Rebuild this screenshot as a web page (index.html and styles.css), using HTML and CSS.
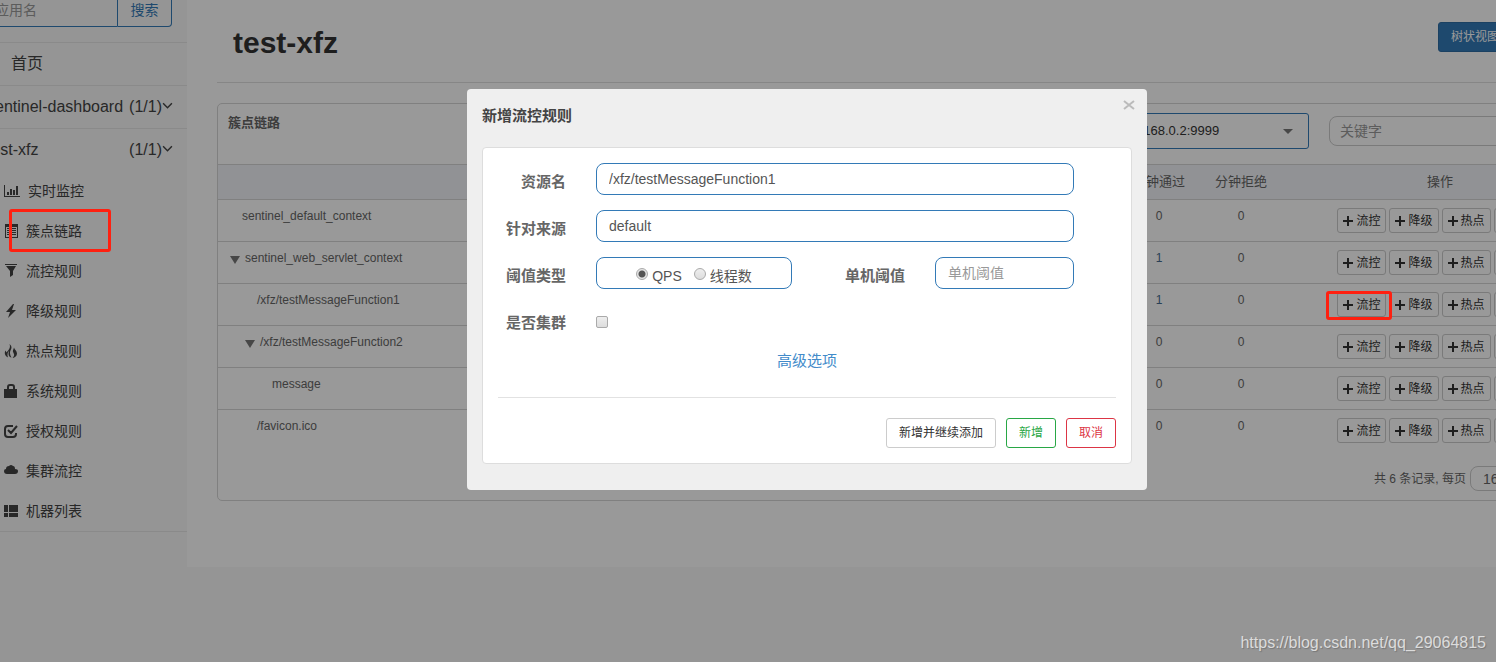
FILE: index.html
```html
<!DOCTYPE html>
<html lang="zh-CN">
<head>
<meta charset="utf-8">
<title>test-xfz</title>
<link rel="stylesheet" href="styles.css">
</head>
<body>
<div class="page">
  <div class="shell">
    <aside class="sidebar">
      <form class="search">
        <input class="search-input" type="text" placeholder="应用名" aria-label="应用名">
        <button class="search-button" type="button">搜索</button>
      </form>
      <nav>
        <a class="nav-item nav-home" href="#">首页</a>
        <a class="nav-item" href="#"><span>sentinel-dashboard</span><span class="count">(1/1)<svg class="chevron" viewBox="0 0 10 10"><path d="M1 3l4 4 4-4"/></svg></span></a>
        <a class="nav-item" href="#"><span>test-xfz</span><span class="count">(1/1)<svg class="chevron" viewBox="0 0 10 10"><path d="M1 3l4 4 4-4"/></svg></span></a>
        <ul class="subnav">
          <li><a href="#"><svg class="icon icon-wide" viewBox="0 0 16 14"><path d="M0 1h1v11h15v1H0zM3 8h2v3H3zM6 5h2v6H6zM9 6h2v5H9zM12 2h2v9h-2z"/></svg>实时监控</a></li>
          <li><a href="#"><svg class="icon" viewBox="0 0 14 14"><path fill-rule="evenodd" d="M1 0h13v14H1zM2 3v10h11V3zM3 4h2v1H3zM6 4h6v1H6zM3 6h2v1H3zM6 6h6v1H6zM3 8h2v1H3zM6 8h6v1H6zM3 10h2v1H3zM6 10h6v1H6z"/></svg>簇点链路</a></li>
          <li><a href="#"><svg class="icon" viewBox="0 0 14 14"><path d="M1 0h12v1H1zM2 2h10L9 7v4l-3 2V7z"/></svg>流控规则</a></li>
          <li><a href="#"><svg class="icon" viewBox="0 0 14 14"><path d="M9 0L2 8h4l-2 6 8-8H8l2-6z"/></svg>降级规则</a></li>
          <li><a href="#"><svg class="icon" viewBox="0 0 14 14"><path d="M5.500 0c3 2.500 2 4.500 1 6.500-1 2-.5 4.500 1 7C4.500 13 4 10 5 7 3.500 8 3 11 4 13.500 1 12 0 9 1.500 6.500l1 2C4.500 6 7 4 5.500 0zM10 3.500c.5 2 3 3.500 3 6 0 2.500-2 4-4.500 4.500 2-2 2-3.500 1-5-1.500-2 0-3.500.5-5.500z"/></svg>热点规则</a></li>
          <li><a href="#"><svg class="icon" viewBox="0 0 14 14"><path fill-rule="evenodd" d="M3 5V3q0-3 3-3h2q3 0 3 3v2h2v9H0V5zM5 5h4V3q0-1-1-1H6Q5 2 5 3z"/></svg>系统规则</a></li>
          <li><a href="#"><svg class="icon" viewBox="0 0 14 14"><path class="stroke" d="M9 2H4Q1 2 1 5v5q0 3 3 3h5q3 0 3-3V9M4 6l3 3 6-7"/></svg>授权规则</a></li>
          <li><a href="#"><svg class="icon" viewBox="0 0 14 14"><path d="M3 10Q0 10 0 7q0-2 2-2 0-3 3-3Q7 0 9 2q2 0 2 3 3 0 3 2 0 3-3 3z"/></svg>集群流控</a></li>
          <li><a href="#"><svg class="icon" viewBox="0 0 14 14"><path d="M0 1h4v7H0zM5 1h9v7H5zM0 9h4v4H0zM5 9h9v4H5z"/></svg>机器列表</a></li>
        </ul>
      </nav>
    </aside>

    <main class="main">
      <header class="page-header">
        <h1>test-xfz</h1>
        <button class="view-button" type="button">树状视图</button>
      </header>
      <section class="panel">
        <div class="panel-head">
          <h2>簇点链路</h2>
          <select class="machine" aria-label="机器"><option>192.168.0.2:9999</option></select>
          <input class="keyword" type="text" placeholder="关键字" aria-label="关键字">
        </div>
        <table class="resources">
          <colgroup><col><col class="col-num"><col class="col-num"><col class="col-actions"></colgroup>
          <thead><tr><th></th><th>分钟通过</th><th>分钟拒绝</th><th>操作</th></tr></thead>
          <tbody>
            <tr><td class="leaf">sentinel_default_context</td><td>0</td><td>0</td><td><div class="actions"><button type="button">流控</button><button type="button">降级</button><button type="button">热点</button><button type="button">授权</button></div></td></tr>
            <tr><td class="branch"><span class="caret"></span>sentinel_web_servlet_context</td><td class="hit">1</td><td>0</td><td><div class="actions"><button type="button">流控</button><button type="button">降级</button><button type="button">热点</button><button type="button">授权</button></div></td></tr>
            <tr><td class="leaf level-1">/xfz/testMessageFunction1</td><td class="hit">1</td><td>0</td><td><div class="actions"><button type="button">流控</button><button type="button">降级</button><button type="button">热点</button><button type="button">授权</button></div></td></tr>
            <tr><td class="branch level-1"><span class="caret"></span>/xfz/testMessageFunction2</td><td>0</td><td>0</td><td><div class="actions"><button type="button">流控</button><button type="button">降级</button><button type="button">热点</button><button type="button">授权</button></div></td></tr>
            <tr><td class="leaf level-2">message</td><td>0</td><td>0</td><td><div class="actions"><button type="button">流控</button><button type="button">降级</button><button type="button">热点</button><button type="button">授权</button></div></td></tr>
            <tr><td class="leaf level-1">/favicon.ico</td><td>0</td><td>0</td><td><div class="actions"><button type="button">流控</button><button type="button">降级</button><button type="button">热点</button><button type="button">授权</button></div></td></tr>
          </tbody>
        </table>
        <div class="pager">
          <label for="page-size">共 6 条记录, 每页</label>
          <input id="page-size" type="text" value="16">
        </div>
      </section>
    </main>
  </div>

  <div class="backdrop">
    <div class="dialog" role="dialog" aria-labelledby="dialog-title">
      <header class="dialog-head">
        <h2 id="dialog-title">新增流控规则</h2>
        <button class="close" type="button" aria-label="关闭"><svg viewBox="0 0 12 12"><path d="M1 2l10 8M11 2L1 10"/></svg></button>
      </header>
      <form class="card">
        <div class="fields">
          <label for="resource">资源名</label>
          <input class="field wide" id="resource" type="text" value="/xfz/testMessageFunction1">
          <label for="origin">针对来源</label>
          <input class="field wide" id="origin" type="text" value="default">
          <span class="label" id="type-label">阈值类型</span>
          <div class="field radios" role="radiogroup" aria-labelledby="type-label">
            <input type="radio" name="type" id="qps" checked><label for="qps">QPS</label>
            <input type="radio" name="type" id="threads"><label for="threads">线程数</label>
          </div>
          <label for="threshold">单机阈值</label>
          <input class="field" id="threshold" type="text" placeholder="单机阈值">
          <label for="cluster">是否集群</label>
          <input type="checkbox" id="cluster">
        </div>
        <a class="advanced" href="#">高级选项</a>
        <footer class="card-foot">
          <button type="button">新增并继续添加</button>
          <button class="add" type="button">新增</button>
          <button class="cancel" type="button">取消</button>
        </footer>
      </form>
    </div>
  </div>

  <div class="marker marker-menu"></div>
  <div class="marker marker-action"></div>
  <div class="watermark">https://blog.csdn.net/qq_29064815</div>
</div>
</body>
</html>
```
FILE: styles.css
```css
* { box-sizing: border-box; }

body {
  margin: 0;
  background: #f8f8f8;
  color: #444;
  font: 14px/20px "Liberation Sans", "Noto Sans CJK SC", sans-serif;
}

button, input, select { font: inherit; color: inherit; margin: 0; }
h1, h2, ul { margin: 0; padding: 0; }
a { text-decoration: none; color: inherit; }
::placeholder { color: #999; opacity: 1; }

.page {
  position: relative;
  min-height: 100vh;
  overflow: hidden;
}

.shell {
  display: flex;
  align-items: flex-start;
  margin: -22px -146px 0 -28px;
}

/* Sidebar */
.sidebar { flex: 0 0 215px; min-width: 0; }

.search { display: flex; padding: 15px; }

.search-input {
  flex: 1;
  min-width: 0;
  height: 34px;
  padding: 0 7px;
  border: 1px solid #337ab7;
  border-radius: 4px 0 0 4px;
  background: #f8f8f8;
}

.search-button {
  width: 54px;
  padding: 0;
  border: 1px solid #337ab7;
  border-left: 0;
  border-radius: 0 4px 4px 0;
  background: #f8f8f8;
  color: #337ab7;
}

.nav-item {
  display: flex;
  justify-content: space-between;
  align-items: center;
  height: 43px;
  padding: 0 14px 0 15px;
  border-top: 1px solid #e7e7e7;
  font-size: 16px;
}

.nav-home { padding-left: 39px; }
.count { display: flex; align-items: center; }

.chevron {
  width: 11px;
  height: 11px;
  margin-bottom: 4px;
  fill: none;
  stroke: #444;
  stroke-width: 1.3;
}

.subnav { list-style: none; border-bottom: 1px solid #e7e7e7; }

.subnav a {
  display: flex;
  align-items: center;
  gap: 8px;
  height: 40px;
  padding-left: 32px;
}

.icon { width: 14px; height: 14px; fill: #444; }
.icon-wide { width: 16px; }
.icon .stroke { fill: none; stroke: #444; stroke-width: 2; }

/* Main column */
.main {
  flex: 1;
  min-width: 0;
  padding: 22px 43px 66px 30px;
  background: #fff;
}

.page-header {
  display: flex;
  justify-content: space-between;
  align-items: flex-start;
  height: 83px;
  padding: 22px 87px 0 16px;
  border-bottom: 1px solid #e0e0e0;
}

h1 { color: #333; font-size: 30px; line-height: 42px; }

.view-button {
  height: 30px;
  padding: 0 12px;
  border: 1px solid #2e6da4;
  border-radius: 3px;
  background: #337ab7;
  color: #fff;
  font-size: 12px;
}

.panel {
  margin-top: 20px;
  border: 1px solid #d5d5d5;
  border-radius: 5px;
  color: #666;
}

.panel-head {
  display: flex;
  align-items: center;
  gap: 20px;
  height: 60px;
  padding: 9px 10px 15px;
}

.panel-head h2 {
  flex: 1;
  align-self: flex-start;
  font-size: 13px;
}

.machine {
  width: 204px;
  height: 36px;
  padding: 0 12px;
  appearance: none;
  border: 1px solid #337ab7;
  border-radius: 3px;
  background: #fff url("data:image/svg+xml,%3Csvg xmlns='http://www.w3.org/2000/svg' viewBox='0 0 10 5'%3E%3Cpath d='M0 0h10L5 5z' fill='%23777'/%3E%3C/svg%3E") no-repeat right 15px center / 10px 5px;
  color: #333;
  font-size: 13px;
}

.keyword {
  width: 259px;
  height: 30px;
  padding: 0 10px;
  border: 1px solid #ccc;
  border-radius: 8px;
  background: #fff;
}

.resources {
  width: 100%;
  table-layout: fixed;
  border-collapse: separate;
  border-spacing: 0;
  font-size: 12px;
}

.col-num { width: 82px; }
.col-actions { width: 316px; }

th {
  height: 35px;
  padding: 0;
  border-top: 1px solid #d5d5d5;
  background: #f2f4f8;
  font-size: 13px;
  font-weight: 400;
}

td {
  padding: 8px 0;
  border-top: 1px solid #d5d5d5;
  line-height: 16px;
  text-align: center;
  vertical-align: top;
}

td.leaf { padding-left: 24px; text-align: left; }
td.branch { padding-left: 12px; text-align: left; }
td.leaf.level-1 { padding-left: 39px; }
td.branch.level-1 { padding-left: 27px; }
td.leaf.level-2 { padding-left: 54px; }
td.hit { color: #456b8f; }

.caret {
  display: inline-block;
  margin-right: 5px;
  border: solid transparent;
  border-width: 8px 5px 0;
  border-top-color: #777;
  vertical-align: -2px;
}

.actions { display: flex; justify-content: center; gap: 3px; }

.actions button {
  display: flex;
  align-items: center;
  gap: 3px;
  height: 25px;
  padding: 0 5px;
  border: 1px solid #ccc;
  border-radius: 3px;
  background: #fff;
  color: #333;
}

.actions button::before {
  content: "";
  width: 10px;
  height: 10px;
  background:
    linear-gradient(#333, #333) center / 10px 2px no-repeat,
    linear-gradient(#333, #333) center / 2px 10px no-repeat;
}

.pager {
  display: flex;
  justify-content: flex-end;
  align-items: center;
  gap: 4px;
  padding: 15px 10px 9px;
  font-size: 12px;
}

.pager input {
  width: 118px;
  height: 25px;
  padding: 0 12px;
  border: 1px solid #ccc;
  border-radius: 8px;
  background: #fff;
  font-size: 14px;
}

/* Dialog */
.backdrop {
  position: absolute;
  inset: 0 -146px 0 -28px;
  display: flex;
  justify-content: center;
  align-items: flex-start;
  padding-top: 89px;
  background: rgba(0, 0, 0, 0.4);
}

.dialog {
  width: 680px;
  padding: 0 15px 26px;
  border-radius: 4px;
  background: #efefef;
}

.dialog-head {
  display: flex;
  justify-content: space-between;
  align-items: flex-start;
  height: 58px;
  padding-top: 10px;
}

.dialog-head h2 { font-size: 15px; line-height: 34px; color: #444; }

.close {
  display: flex;
  width: 12px;
  height: 12px;
  margin-right: -3px;
  padding: 0;
  border: 0;
  background: none;
}

.close svg { width: 12px; height: 12px; fill: none; stroke: #bbb; stroke-width: 2; }

.card {
  display: flex;
  flex-direction: column;
  padding: 15px;
  border: 1px solid #ddd;
  border-radius: 4px;
  background: #fff;
}

.fields {
  display: grid;
  grid-template-columns: 68px 196px 1fr 139px;
  grid-auto-rows: 32px;
  gap: 15px 30px;
  align-items: center;
  padding-right: 42px;
  color: #555;
}

.fields > label, .fields > .label {
  padding-top: 5px;
  color: #666;
  font-size: 15px;
  font-weight: 700;
  text-align: right;
}

.field {
  width: 100%;
  height: 32px;
  padding: 0 12px;
  border: 1px solid #337ab7;
  border-radius: 8px;
  background: #fff;
}

.wide { grid-column: 2 / -1; }

.radios {
  display: flex;
  justify-content: center;
  align-items: center;
  gap: 4px;
  padding-top: 5px;
}

.radios label + input { margin-left: 8px; }

input[type="radio"], input[type="checkbox"] {
  appearance: none;
  width: 12px;
  height: 12px;
  border: 1px solid #aaa;
  border-radius: 2px;
  background: linear-gradient(#eee, #ddd);
}

input[type="checkbox"] { margin-top: 4px; }
input[type="radio"] { border-radius: 50%; margin-bottom: 4px; }
input[type="radio"]:checked { background: radial-gradient(circle, #555 3px, #e4e4e4 4px); }

.advanced {
  align-self: center;
  margin-top: 15px;
  color: #428bca;
  font-size: 15px;
}

.card-foot {
  display: flex;
  justify-content: flex-end;
  gap: 10px;
  margin-top: 26px;
  padding-top: 20px;
  border-top: 1px solid #e2e2e2;
}

.card-foot button {
  height: 30px;
  padding: 0 11px;
  border: 1px solid #ccc;
  border-radius: 3px;
  background: #fff;
  color: #333;
  font-size: 12px;
}

.card-foot button:first-child { min-width: 110px; }
.card-foot .add { min-width: 50px; border-color: #28a745; color: #28a745; }
.card-foot .cancel { min-width: 50px; border-color: #dc3545; color: #dc3545; }

/* Highlight frames and watermark */
.marker {
  position: absolute;
  border: 3px solid #ff2010;
  border-radius: 3px;
}

.marker-menu { left: 9px; top: 209px; width: 102px; height: 43px; }
.marker-action { right: 104px; top: 291px; width: 66px; height: 29px; }

.watermark {
  position: absolute;
  right: 10px;
  bottom: 9px;
  color: #dcdcdc;
  font-size: 16px;
  text-shadow: 1px 1px 1px #777;
}
```
